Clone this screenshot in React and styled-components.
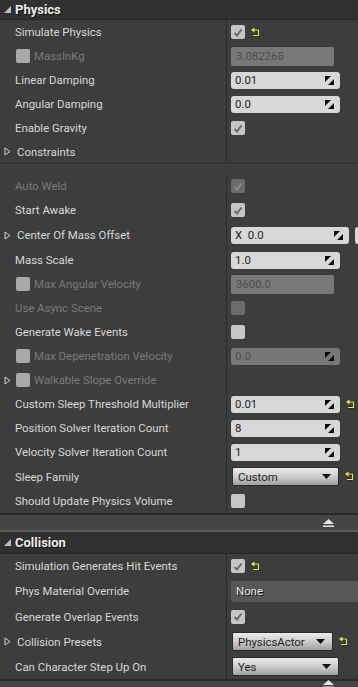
import React from "react";
import styled, { createGlobalStyle, css } from "styled-components";

const Global = createGlobalStyle`
  html, body {
    margin: 0;
    padding: 0;
    background: #3d3d3d;
  }
  body {
    width: 358px;
    height: 687px;
    overflow: hidden;
    font-family: Roboto, "Liberation Sans", sans-serif;
  }
`;

const Panel = styled.div`
  width: 358px;
  display: flex;
  flex-direction: column;
  background: #3d3d3d;
`;

const Header = styled.div`
  height: ${(p) => p.$h || 20}px;
  display: flex;
  align-items: center;
  gap: 4px;
  padding-left: 4px;
  background: #303030;
  border-bottom: 1px solid #262626;
  box-sizing: border-box;
`;

const HeaderTitle = styled.span`
  color: #ececec;
  font-weight: 700;
  font-size: 13px;
  text-shadow: 1px 1px 0 #111;
`;

const Row = styled.div`
  height: ${(p) => p.$h || 24}px;
  display: flex;
`;

const LabelCell = styled.div`
  width: 227px;
  flex-shrink: 0;
  display: flex;
  align-items: center;
  gap: 4px;
  padding-left: ${(p) => (p.$expander ? 4 : 15)}px;
  border-right: 1px solid #2b2b2b;
  box-sizing: border-box;
  white-space: nowrap;
  overflow: visible;
`;

const Label = styled.span`
  font-size: 11.4px;
  color: ${(p) => (p.$disabled ? "#7a7a7a" : "#d8d8d8")};
  margin-left: ${(p) => p.$ml || 0}px;
`;

const ValueCell = styled.div`
  flex: 1;
  display: flex;
  align-items: center;
  gap: 6px;
  padding-left: 4px;
  overflow: hidden;
`;

const Check = styled.div`
  width: 14px;
  height: 14px;
  border-radius: 2px;
  flex-shrink: 0;
  display: flex;
  align-items: center;
  justify-content: center;
  background: ${(p) => (p.$dim ? "#6b6b6b" : "#c6c6c6")};
  ${(p) =>
    p.$faded &&
    css`
      background: #a9a9a9;
    `}
  margin-left: ${(p) => p.$ml || 0}px;
`;

const NumBox = styled.div`
  width: ${(p) => p.$w || 109}px;
  height: ${(p) => p.$h || 17}px;
  border-radius: 3px;
  flex-shrink: 0;
  display: flex;
  align-items: center;
  justify-content: space-between;
  padding: 0 6px 0 4px;
  box-sizing: border-box;
  background: ${(p) => (p.$disabled ? "#777777" : "#d8d8d8")};
  color: ${(p) => (p.$disabled ? "#505050" : "#1c1c1c")};
  font-size: 11.4px;
`;

const TextBox = styled.div`
  width: ${(p) => p.$w || 103}px;
  height: ${(p) => p.$h || 19}px;
  border-radius: 2px;
  flex-shrink: 0;
  display: flex;
  align-items: center;
  padding-left: 5px;
  box-sizing: border-box;
  background: ${(p) => p.$bg || "#787878"};
  color: ${(p) => p.$fg || "#4e4e4e"};
  font-size: 11.4px;
  ${(p) =>
    p.$shadow &&
    css`
      text-shadow: 1px 1px 0 #111;
    `}
`;

const Combo = styled.div`
  width: ${(p) => p.$w || 107}px;
  height: 19px;
  flex-shrink: 0;
  margin-left: 1px;
  border-radius: 2px;
  border: 1px solid #2a2a2a;
  box-sizing: border-box;
  display: flex;
  align-items: center;
  justify-content: space-between;
  padding: 0 7px 0 5px;
  background: linear-gradient(#ececec, #c9c9c9 55%, #9f9f9f);
  color: #1c1c1c;
  font-size: 11.4px;
`;

const GroupGap = styled.div`
  height: ${(p) => p.$h}px;
  border-top: 1px solid #2a2a2a;
  box-shadow: inset 0 1px 0 #474747;
  box-sizing: border-box;
`;

const FoldBar = styled.div`
  height: ${(p) => p.$h || 17}px;
  display: flex;
  align-items: center;
  justify-content: flex-end;
  padding-right: 24px;
  background: #454545;
  border-top: 2px solid #2a2a2a;
  border-bottom: 2px solid #5a5a5a;
  box-sizing: border-box;
`;

const Spin = () => (
  <svg width="9" height="9" viewBox="0 0 9 9">
    <polygon points="0,0 6,0 0,6" fill="#0a0a0a" />
    <polygon points="9,3 9,9 3,9" fill="#0a0a0a" />
  </svg>
);

const Tick = ({ color = "#6a6a6a" }) => (
  <svg width="10" height="9" viewBox="0 0 10 9">
    <path d="M1.5 5 L4 7.5 L8.5 1.5" fill="none" stroke={color} strokeWidth="2" />
  </svg>
);

const Reset = () => (
  <svg width="9" height="9" viewBox="0 0 9 9">
    <path d="M3 2 H7.5 V7.5 H2" fill="none" stroke="#2a2a10" strokeWidth="2.4" />
    <path d="M3 2 H7.5 V7.5 H2" fill="none" stroke="#e4e46a" strokeWidth="1.2" />
    <polygon points="0,2 3.5,-0.5 3.5,4.5" fill="#e4e46a" />
  </svg>
);

const DownArrow = () => (
  <svg width="9" height="5" viewBox="0 0 9 5">
    <polygon points="0,0 9,0 4.5,5" fill="#111" />
  </svg>
);

const Expander = () => (
  <svg width="7" height="9" viewBox="0 0 7 9">
    <polygon points="1,1 6,4.5 1,8" fill="none" stroke="#cfcfcf" strokeWidth="1" />
  </svg>
);

const Expanded = () => (
  <svg width="7" height="7" viewBox="0 0 7 7">
    <polygon points="7,0 7,7 0,7" fill="#bdbdbd" />
  </svg>
);

const UpArrow = () => (
  <svg width="11" height="8" viewBox="0 0 11 8">
    <polygon points="5.5,0 11,5 0,5" fill="#e6e6e6" />
    <rect x="0" y="6.5" width="11" height="1.5" fill="#e6e6e6" />
  </svg>
);

const Num = ({ value, w, disabled }) => (
  <NumBox $w={w} $disabled={disabled}>
    <span>{value}</span>
    <Spin />
  </NumBox>
);

function Prop({ label, disabled, expander, check, h, children }) {
  return (
    <Row $h={h}>
      <LabelCell $expander={expander}>
        {expander && <Expander />}
        {check && <Check $faded $ml={1} />}
        <Label $disabled={disabled} $ml={check ? 0 : expander ? 2 : 0}>
          {label}
        </Label>
      </LabelCell>
      <ValueCell>{children}</ValueCell>
    </Row>
  );
}

function App() {
  return (
    <Panel>
      <Global />
      <Header>
        <Expanded />
        <HeaderTitle>Physics</HeaderTitle>
      </Header>
      <Prop label="Simulate Physics">
        <Check><Tick /></Check>
        <Reset />
      </Prop>
      <Prop label="MassInKg" disabled check>
        <TextBox>3.082268</TextBox>
      </Prop>
      <Prop label="Linear Damping">
        <Num value="0.01" />
      </Prop>
      <Prop label="Angular Damping">
        <Num value="0.0" />
      </Prop>
      <Prop label="Enable Gravity">
        <Check><Tick /></Check>
      </Prop>
      <Prop label="Constraints" expander h={23} />
      <GroupGap $h={11} />

      <Prop label="Auto Weld" disabled>
        <Check $dim><Tick color="#8a8a8a" /></Check>
      </Prop>
      <Prop label="Start Awake">
        <Check><Tick /></Check>
      </Prop>
      <Prop label="Center Of Mass Offset" expander h={26}>
        <NumBox $w={118}>
          <span>X&nbsp;&nbsp;0.0</span>
          <Spin />
        </NumBox>
        <NumBox $w={20} />
      </Prop>
      <Prop label="Mass Scale">
        <Num value="1.0" />
      </Prop>
      <Prop label="Max Angular Velocity" disabled check>
        <TextBox>3600.0</TextBox>
      </Prop>
      <Prop label="Use Async Scene" disabled>
        <Check $dim />
      </Prop>
      <Prop label="Generate Wake Events">
        <Check />
      </Prop>
      <Prop label="Max Depenetration Velocity" disabled check>
        <Num value="0.0" disabled />
      </Prop>
      <Prop label="Walkable Slope Override" disabled check expander />
      <Prop label="Custom Sleep Threshold Multiplier">
        <Num value="0.01" />
        <Reset />
      </Prop>
      <Prop label="Position Solver Iteration Count">
        <Num value="8" />
      </Prop>
      <Prop label="Velocity Solver Iteration Count">
        <Num value="1" />
      </Prop>
      <Prop label="Sleep Family" h={25}>
        <Combo>
          <span>Custom</span>
          <DownArrow />
        </Combo>
        <Reset />
      </Prop>
      <Prop label="Should Update Physics Volume">
        <Check />
      </Prop>
      <FoldBar $h={19}>
        <UpArrow />
      </FoldBar>

      <Header $h={22}>
        <Expanded />
        <HeaderTitle>Collision</HeaderTitle>
      </Header>
      <Prop label="Simulation Generates Hit Events">
        <Check><Tick /></Check>
        <Reset />
      </Prop>
      <Prop label="Phys Material Override" h={26}>
        <TextBox $w={130} $h={21} $bg="#575757" $fg="#e6e6e6" $shadow>
          None
        </TextBox>
      </Prop>
      <Prop label="Generate Overlap Events" h={25}>
        <Check><Tick /></Check>
      </Prop>
      <Prop label="Collision Presets" expander h={25}>
        <Combo $w={101}>
          <span>PhysicsActor</span>
          <DownArrow />
        </Combo>
        <Reset />
      </Prop>
      <Prop label="Can Character Step Up On" h={25}>
        <Combo>
          <span>Yes</span>
          <DownArrow />
        </Combo>
      </Prop>
      <FoldBar $h={10}>
        <UpArrow />
      </FoldBar>
    </Panel>
  );
}

export default App;
